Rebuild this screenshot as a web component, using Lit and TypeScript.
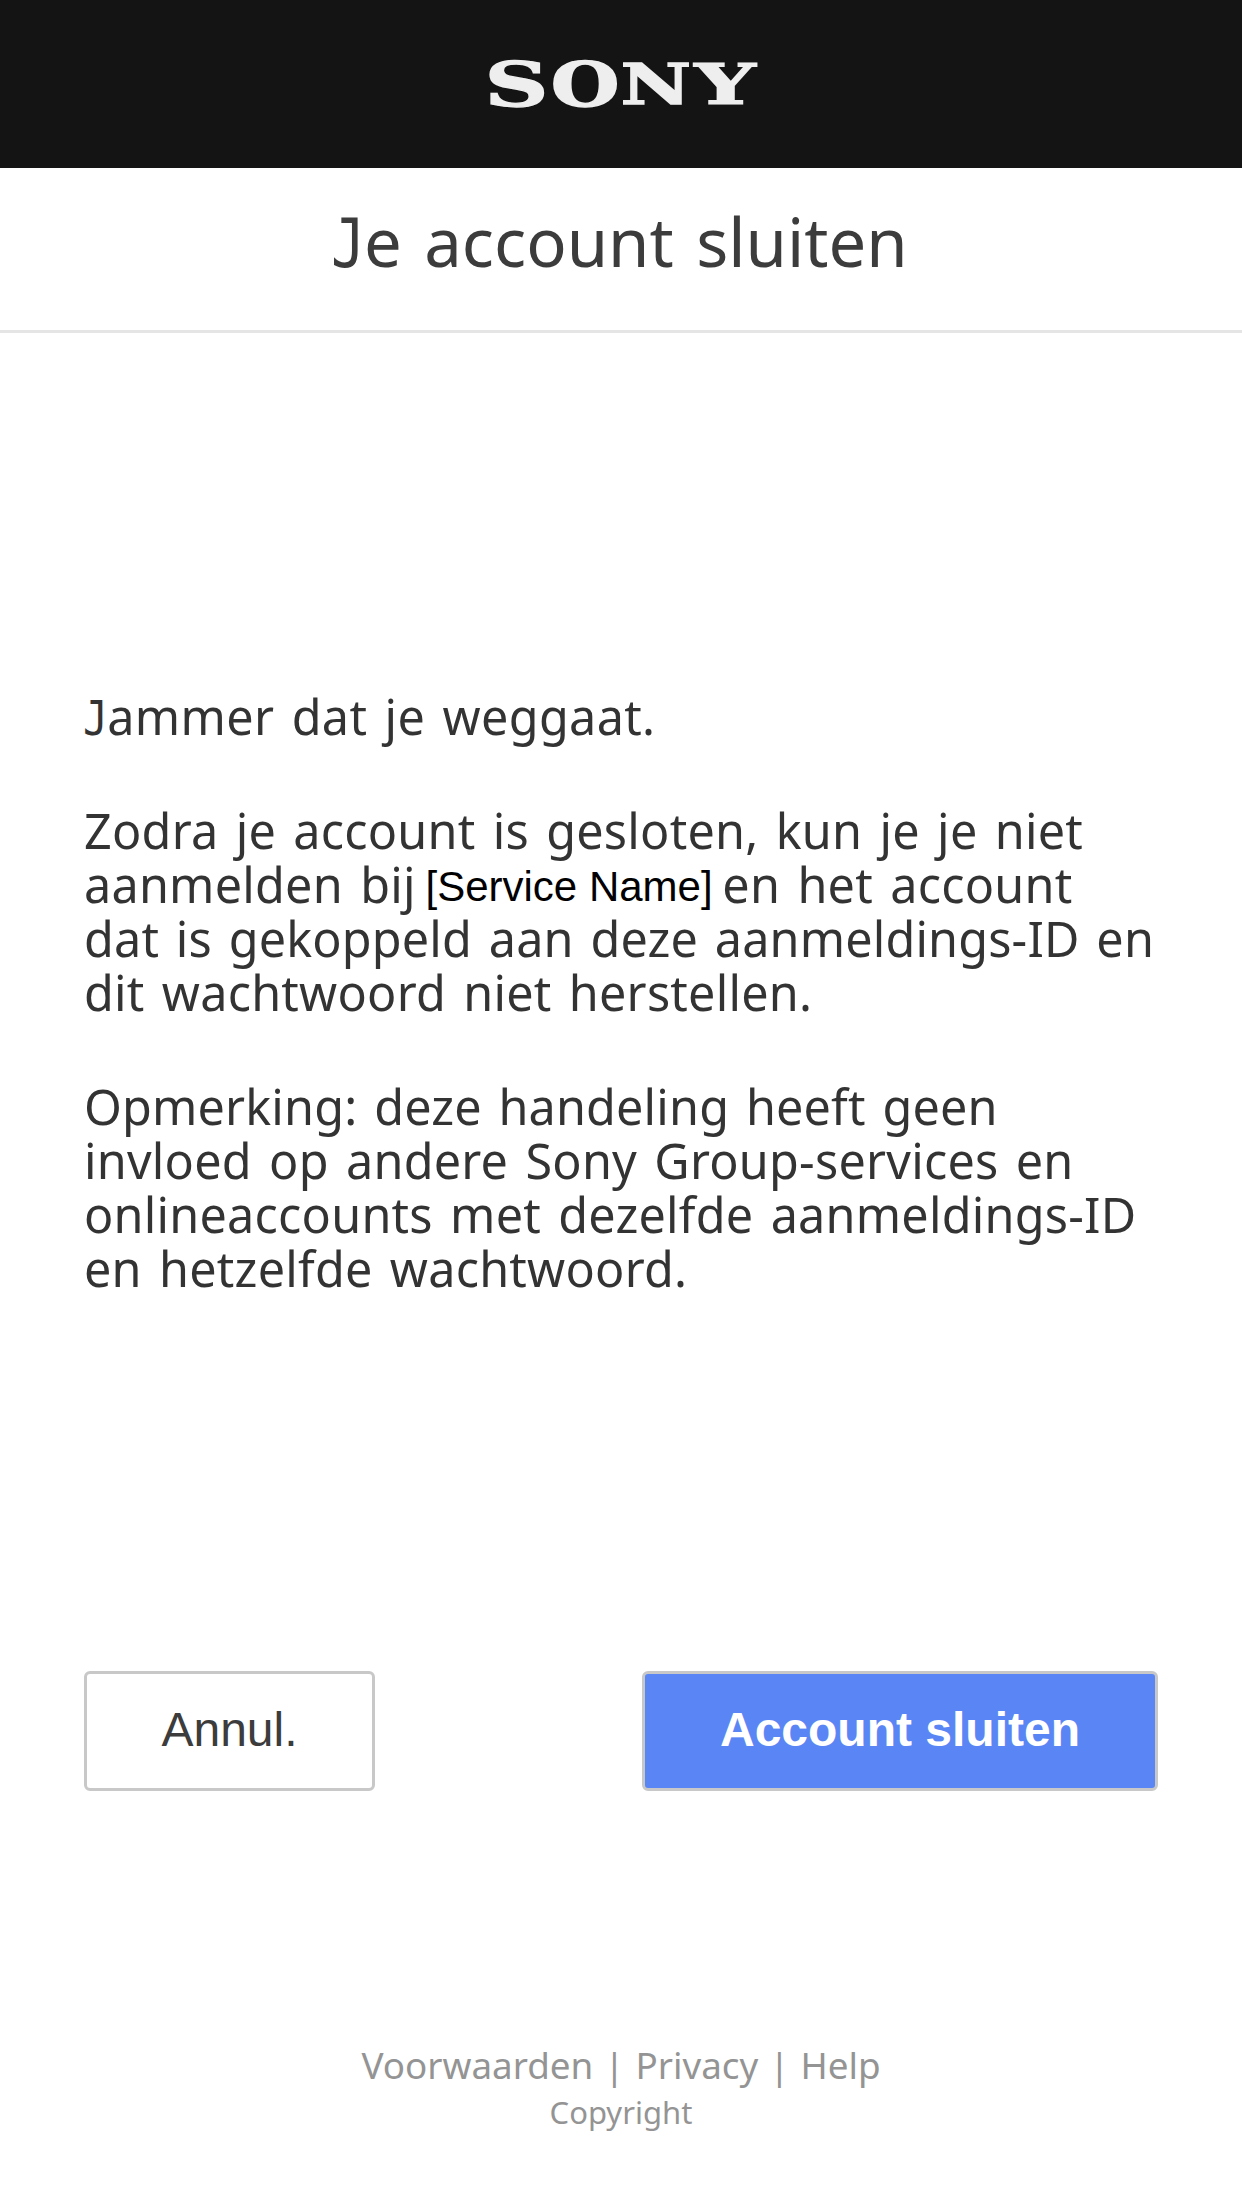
import { LitElement, html, css, svg } from "lit";
import { customElement } from "lit/decorators.js";

const WORDMARK = [
  { letter: "S", x: 484.6, y: 106, size: 61.2, stretch: 1.45 },
  { letter: "O", x: 550.8, y: 106, size: 61.2, stretch: 1.29 },
  { letter: "N", x: 620.4, y: 104.4, size: 56, stretch: 1.38 },
  { letter: "Y", x: 694.6, y: 104.4, size: 56, stretch: 1.53 },
];

@customElement("app-root")
export class AppRoot extends LitElement {
  static styles = css`
    :host {
      display: flex;
      flex-direction: column;
      box-sizing: border-box;
      width: 1242px;
      height: 2208px;
      background: #fff;
      color: #333;
      font-family: "Noto Sans", "DejaVu Sans", sans-serif;
    }
    .bar {
      display: flex;
      justify-content: center;
      box-sizing: border-box;
      height: 168px;
      padding: 20px 0 0 6px;
      background: #141414;
    }
    .logo {
      display: block;
      fill: #eee;
      stroke: #eee;
      stroke-width: 1.6px;
      font-family: "DejaVu Serif", serif;
      font-weight: bold;
    }
    .logo text {
      vector-effect: non-scaling-stroke;
    }
    .title {
      box-sizing: border-box;
      height: 165px;
      margin: 0;
      padding: 27px 2px 0 0;
      border-bottom: 3px solid #e5e5e5;
      color: #3c3c3c;
      font-size: 67px;
      font-weight: 400;
      line-height: 92px;
      word-spacing: 5px;
      text-align: center;
      white-space: nowrap;
    }
    .j {
      display: inline-block;
      font-family: "DejaVu Sans Mono", monospace;
      line-height: 1;
      transform: scaleX(0.85);
      transform-origin: 0 50%;
      margin-right: -0.11em;
      margin-left: -0.02em;
    }
    .copy {
      margin-top: 356px;
      padding-left: 84px;
      font-size: 48.5px;
      line-height: 54px;
      letter-spacing: 0.24px;
      word-spacing: 4.4px;
      white-space: nowrap;
    }
    .copy p {
      margin: 0 0 60px;
    }
    .intro {
      letter-spacing: 0.35px;
    }
    .tight {
      letter-spacing: 0.17px;
      word-spacing: 4px;
    }
    .service {
      margin: 0 -7.5px;
      color: #000;
      font-family: "Liberation Sans", Arial, sans-serif;
      font-size: 42px;
      line-height: 0;
      letter-spacing: 0;
      word-spacing: 0;
      vertical-align: 2px;
    }
    .actions {
      display: flex;
      justify-content: space-between;
      margin-top: 316px;
      padding: 0 84px;
    }
    .btn {
      box-sizing: border-box;
      height: 120px;
      padding: 0 0 3px;
      border: 3px solid #c8c8c8;
      border-radius: 6px;
      background: #fff;
      color: #3c3c3c;
      font-family: "Liberation Sans", Arial, sans-serif;
      font-size: 48px;
      line-height: 1;
    }
    .cancel {
      width: 291px;
    }
    .confirm {
      width: 516px;
      background: #5a86f5;
      color: #fff;
      font-weight: 700;
    }
    .foot {
      margin-top: 249px;
      color: #949494;
      text-align: center;
      white-space: nowrap;
    }
    .links {
      margin-bottom: 1px;
      font-size: 36.8px;
      line-height: 50px;
      word-spacing: 1.4px;
    }
    .copyright {
      font-size: 31px;
      line-height: 43px;
    }
  `;

  render() {
    return html`
      <header class="bar">
        <svg class="logo" width="310" height="130" viewBox="469 20 310 130" role="img">
          ${WORDMARK.map(
            (g) => svg`<text font-size=${g.size} transform="translate(${g.x} ${g.y}) scale(${g.stretch} 1)">${g.letter}</text>`
          )}
        </svg>
      </header>
      <h1 class="title"><span class="j">J</span>e account sluiten</h1>
      <main class="copy">
        <p class="intro"><span class="j">J</span>ammer dat je weggaat.</p>
        <p>
          Zodra je account is gesloten, kun je je niet<br />
          aanmelden bij <span class="service">[Service Name]</span> en het account<br />
          <span class="tight">dat is gekoppeld aan deze aanmeldings-ID en</span><br />
          dit wachtwoord niet herstellen.
        </p>
        <p>
          <span class="tight">Opmerking: deze handeling heeft geen</span><br />
          invloed op andere Sony Group-services en<br />
          onlineaccounts met dezelfde aanmeldings-ID<br />
          en hetzelfde wachtwoord.
        </p>
      </main>
      <div class="actions">
        <button class="btn cancel">Annul.</button>
        <button class="btn confirm">Account sluiten</button>
      </div>
      <footer class="foot">
        <div class="links">Voorwaarden | Privacy | Help</div>
        <div class="copyright">Copyright</div>
      </footer>
    `;
  }
}
